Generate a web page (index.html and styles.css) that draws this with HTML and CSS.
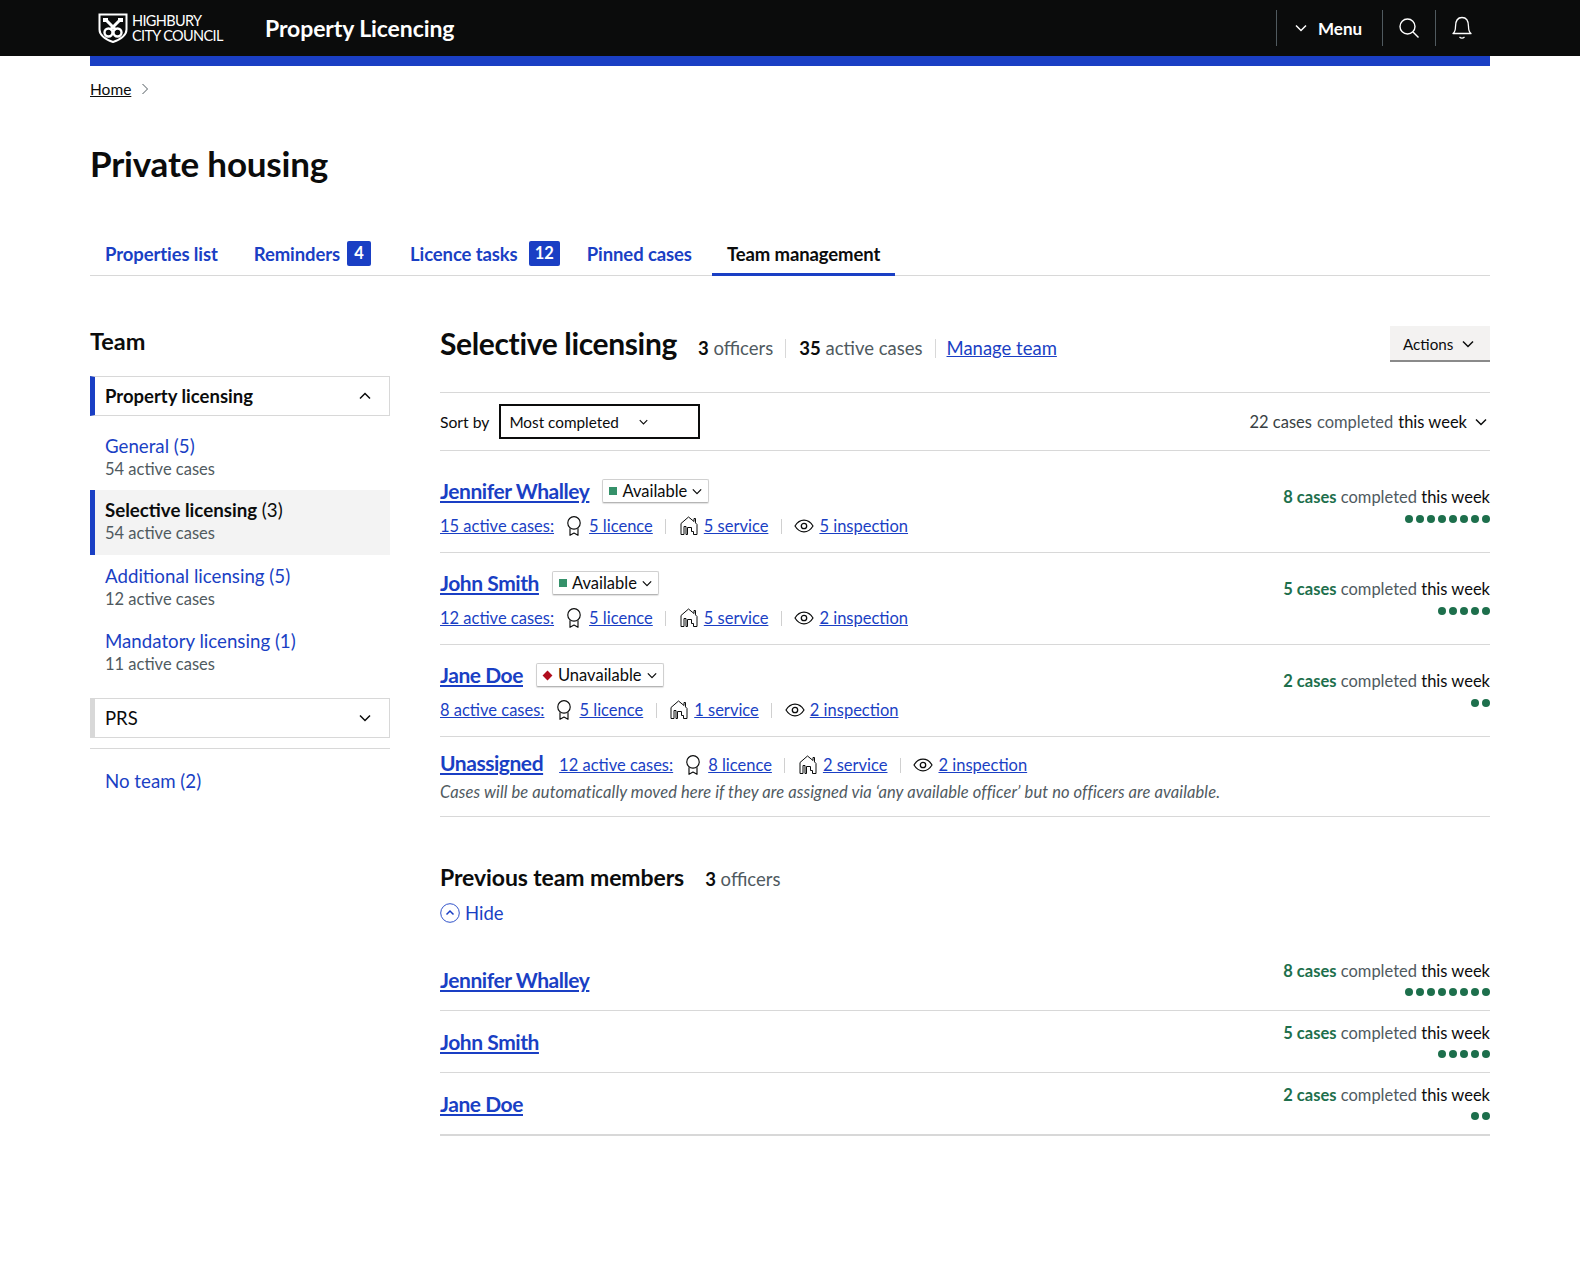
FILE: index.html
```html
<!DOCTYPE html>
<html lang="en">
<head>
<meta charset="utf-8">
<title>Private housing</title>
<link rel="stylesheet" href="styles.css">
</head>
<body>
<svg width="0" height="0" class="defs">
  <defs>
    <symbol id="i-award" viewBox="0 0 18 24"><circle cx="9" cy="8.500" r="7" fill="none" stroke="currentColor" stroke-width="1.300"/><path d="M4.500 14.500v8l4.500-2.500 4.500 2.500v-8" fill="none" stroke="currentColor" stroke-width="1.300" stroke-linejoin="round"/></symbol>
    <symbol id="i-house" viewBox="0 0 18 20"><path d="M1 18.500V7.500L8.500 1 14 5.500V2.500h1.500v4.400L17 8.500v10h-3.500v-3h-2v-4H7.500v7H6v-8H4v8z" fill="none" stroke="currentColor" stroke-width="1" stroke-linejoin="round"/></symbol>
    <symbol id="i-eye" viewBox="0 0 20 14"><path d="M1 7c2.300-3.800 5.300-5.800 9-5.800s6.700 2 9 5.800c-2.300 3.800-5.300 5.800-9 5.800S3.300 10.800 1 7z" fill="none" stroke="currentColor" stroke-width="1.200"/><circle cx="10" cy="7" r="2.700" fill="none" stroke="currentColor" stroke-width="1.300"/></symbol>
    <symbol id="i-chev" viewBox="0 0 12 8"><path d="M1 1.500l5 5 5-5" fill="none" stroke="currentColor" stroke-width="1.500"/></symbol>
  </defs>
</svg>
<header class="topbar">
  <div class="brand">
    <svg class="crest" width="30" height="30" viewBox="0 0 30 30"><path d="M1.500 1.500h27v15c0 6-5 9.500-13.500 12.500C6.500 26 1.500 22.500 1.500 16.500z" fill="#0b0c0c" stroke="#fff" stroke-width="2"/><path d="M7 6l11 11M23 6L12 17" stroke="#fff" stroke-width="3"/><path d="M5 5h5v4H5zM20 5h5v4h-5z" fill="#fff"/><circle cx="10.500" cy="19.500" r="4" fill="none" stroke="#fff" stroke-width="2.400"/><circle cx="19.500" cy="19.500" r="4" fill="none" stroke="#fff" stroke-width="2.400"/></svg>
    <div class="brand-name">HIGHBURY<br>CITY COUNCIL</div>
    <div class="service">Property Licencing</div>
  </div>
  <nav class="top-actions">
    <div class="top-item menu"><svg class="chev-white" width="12" height="8"><use href="#i-chev"/></svg><span>Menu</span></div>
    <div class="top-item icon"><svg width="22" height="22" viewBox="0 0 22 22"><circle cx="9.500" cy="9.500" r="7.500" fill="none" stroke="#fff" stroke-width="1.400"/><path d="M15 15l5.500 5.500" stroke="#fff" stroke-width="1.400"/></svg></div>
    <div class="top-item icon"><svg width="22" height="26" viewBox="0 0 22 26"><path d="M2 18.500c2-1.500 2.500-3 2.500-7C4.500 6 7 2.500 11 2.500s6.500 3.500 6.500 9c0 4 .5 5.500 2.500 7z" fill="none" stroke="#fff" stroke-width="1.300" stroke-linejoin="round"/><path d="M8.500 22c1.500 1.300 3.500 1.300 5 0" fill="none" stroke="#fff" stroke-width="1.300"/></svg></div>
  </nav>
</header>
<div class="wrap">
  <div class="blue-bar"></div>
  <div class="crumbs"><a href="#">Home</a><svg width="8" height="12" viewBox="0 0 8 12"><path d="M1.500 1l5 5-5 5" fill="none" stroke="#505a5f" stroke-width="1"/></svg></div>
  <h1>Private housing</h1>
  <div class="tabs">
    <a class="tab tab-props" href="#">Properties list</a>
    <a class="tab tab-rem" href="#">Reminders<span class="badge">4</span></a>
    <a class="tab tab-lic" href="#">Licence tasks<span class="badge">12</span></a>
    <a class="tab" href="#">Pinned cases</a>
    <a class="tab active" href="#">Team management</a>
  </div>
  <div class="layout">
    <aside class="side">
      <h2>Team</h2>
      <div class="acc open"><span>Property licensing</span><svg class="chev-up" width="12" height="8"><use href="#i-chev"/></svg></div>
      <ul class="team-list">
        <li><a href="#">General (5)</a><small>54 active cases</small></li>
        <li class="current"><b>Selective licensing</b> (3)<small>54 active cases</small></li>
        <li><a href="#">Additional licensing (5)</a><small>12 active cases</small></li>
        <li><a href="#">Mandatory licensing (1)</a><small>11 active cases</small></li>
      </ul>
      <div class="acc closed"><span>PRS</span><svg width="12" height="8"><use href="#i-chev"/></svg></div>
      <div class="side-hr"></div>
      <a class="noteam" href="#">No team (2)</a>
    </aside>
    <main class="main">
      <div class="main-head">
        <div class="title"><h2>Selective licensing</h2>
          <span class="stat"><b>3</b> officers</span><span class="stat"><b>35</b> active cases</span><a class="manage" href="#">Manage team</a></div>
        <button class="actions">Actions<svg width="12" height="8"><use href="#i-chev"/></svg></button>
      </div>
      <div class="sortbar">
        <div class="sort"><span>Sort by</span><div class="select">Most completed<svg width="9" height="6" viewBox="0 0 12 8"><use href="#i-chev"/></svg></div></div>
        <div class="week"><span>22 cases</span> <em>completed</em> <span class="tw">this week</span><svg width="12" height="8"><use href="#i-chev"/></svg></div>
      </div>

      <section class="row">
        <div class="row-l">
          <div class="nameline"><a class="name" href="#">Jennifer Whalley</a><span class="status"><i class="sq"></i>Available<svg width="10" height="7" viewBox="0 0 12 8"><use href="#i-chev"/></svg></span></div>
          <div class="cases"><a href="#">15 active cases:</a><svg class="ic-a"><use href="#i-award"/></svg><a href="#">5 licence</a><i class="sep"></i><svg class="ic-h"><use href="#i-house"/></svg><a href="#">5 service</a><i class="sep"></i><svg class="ic-e"><use href="#i-eye"/></svg><a href="#">5 inspection</a></div>
        </div>
        <div class="done"><p><b>8 cases</b> <em>completed</em> this week</p><div class="dots"><i></i><i></i><i></i><i></i><i></i><i></i><i></i><i></i></div></div>
      </section>
      <section class="row">
        <div class="row-l">
          <div class="nameline"><a class="name" href="#">John Smith</a><span class="status"><i class="sq"></i>Available<svg width="10" height="7" viewBox="0 0 12 8"><use href="#i-chev"/></svg></span></div>
          <div class="cases"><a href="#">12 active cases:</a><svg class="ic-a"><use href="#i-award"/></svg><a href="#">5 licence</a><i class="sep"></i><svg class="ic-h"><use href="#i-house"/></svg><a href="#">5 service</a><i class="sep"></i><svg class="ic-e"><use href="#i-eye"/></svg><a href="#">2 inspection</a></div>
        </div>
        <div class="done"><p><b>5 cases</b> <em>completed</em> this week</p><div class="dots"><i></i><i></i><i></i><i></i><i></i></div></div>
      </section>
      <section class="row">
        <div class="row-l">
          <div class="nameline"><a class="name" href="#">Jane Doe</a><span class="status"><i class="dia"></i>Unavailable<svg width="10" height="7" viewBox="0 0 12 8"><use href="#i-chev"/></svg></span></div>
          <div class="cases"><a href="#">8 active cases:</a><svg class="ic-a"><use href="#i-award"/></svg><a href="#">5 licence</a><i class="sep"></i><svg class="ic-h"><use href="#i-house"/></svg><a href="#">1 service</a><i class="sep"></i><svg class="ic-e"><use href="#i-eye"/></svg><a href="#">2 inspection</a></div>
        </div>
        <div class="done"><p><b>2 cases</b> <em>completed</em> this week</p><div class="dots"><i></i><i></i></div></div>
      </section>
      <section class="row unassigned">
        <div class="cases"><a class="name" href="#">Unassigned</a><a class="first" href="#">12 active cases:</a><svg class="ic-a"><use href="#i-award"/></svg><a href="#">8 licence</a><i class="sep"></i><svg class="ic-h"><use href="#i-house"/></svg><a href="#">2 service</a><i class="sep"></i><svg class="ic-e"><use href="#i-eye"/></svg><a href="#">2 inspection</a></div>
        <p class="note">Cases will be automatically moved here if they are assigned via ‘any available officer’ but no officers are available.</p>
      </section>

      <div class="prev-head"><h3>Previous team members</h3><span class="stat"><b>3</b> officers</span></div>
      <a class="hide" href="#"><svg width="20" height="20" viewBox="0 0 20 20"><circle cx="10" cy="10" r="9.300" fill="none" stroke="#1a3fc4" stroke-width=".9"/><path d="M6.500 11.500L10 8l3.500 3.500" fill="none" stroke="#1a3fc4" stroke-width="1.500"/></svg>Hide</a>
      <div class="prev">
        <section class="row small"><a class="name" href="#">Jennifer Whalley</a><div class="done"><p><b>8 cases</b> <em>completed</em> this week</p><div class="dots"><i></i><i></i><i></i><i></i><i></i><i></i><i></i><i></i></div></div></section>
        <section class="row small"><a class="name" href="#">John Smith</a><div class="done"><p><b>5 cases</b> <em>completed</em> this week</p><div class="dots"><i></i><i></i><i></i><i></i><i></i></div></div></section>
        <section class="row small last"><a class="name" href="#">Jane Doe</a><div class="done"><p><b>2 cases</b> <em>completed</em> this week</p><div class="dots"><i></i><i></i></div></div></section>
      </div>
    </main>
  </div>
</div>
</body>
</html>
```

FILE: styles.css
```css
* { box-sizing: border-box; }
html, body { margin: 0; padding: 0; }
body { font-family: "Lato", "Noto Sans", sans-serif; font-size: 18px; color: #0b0c0c; background: #fff; height: 1285px; overflow: hidden; }
a { color: #1a3fc4; }
h1, h2, h3, p, ul { margin: 0; padding: 0; }
.defs { position: absolute; }
.topbar { height: 56px; background: #0b0c0c; color: #fff; display: flex; justify-content: space-between; padding-left: 98px; padding-right: 92px; }
.brand { display: flex; align-items: center; }
.crest { margin-right: 4px; }
.brand-name { font-size: 14.500px; line-height: 15px; width: 133px; letter-spacing: -.65px; }
.service { font-size: 23px; font-weight: 700; letter-spacing: -.1px; }
.top-actions { display: flex; align-items: center; height: 36px; margin-top: 10px; }
.top-item { height: 36px; display: flex; align-items: center; border-left: 1px solid #505a5f; }
.menu { width: 106px; padding-left: 18px; gap: 11px; font-weight: 700; font-size: 17px; }
.chev-white { color: #fff; }
.icon { width: 53px; justify-content: center; }
.wrap { width: 1400px; margin-left: 90px; }
.blue-bar { height: 10px; background: #1a3fc4; }
.crumbs { display: flex; align-items: center; gap: 10px; height: 44px; padding-top: 1px; font-size: 15.500px; }
.crumbs a { color: #0b0c0c; }
h1 { font-size: 35px; line-height: 44px; margin-top: 31px; font-weight: 700; letter-spacing: -.2px; }
.tabs { display: flex; gap: 5px; height: 46px; margin-top: 45px; border-bottom: 1px solid #d8d8d8; }
.tab { display: flex; padding: 2px 15px 0; height: 46px; align-items: center; font-weight: 700; font-size: 18.500px; letter-spacing: -.1px; text-decoration: none; white-space: nowrap; }
.tab-props { margin-right: 1px; }
.tab-rem .badge { margin-left: 7px; margin-right: 4px; }
.tab-lic .badge { margin-left: 11px; margin-right: -8px; }
.tab.active { color: #0b0c0c; border-bottom: 3px solid #1a3fc4; padding-top: 5px; }
.badge { position: relative; top: -1px; display: block; min-width: 24px; height: 25px; line-height: 25px; background: #1a3fc4; color: #fff; border-radius: 2px; text-align: center; padding: 0 6px; font-size: 16.500px; letter-spacing: 0; }
.layout { display: flex; gap: 50px; margin-top: 48px; }
.side { width: 300px; flex: none; }
.side h2 { font-size: 23.500px; line-height: 34px; margin-bottom: 18px; font-weight: 700; }
.acc { height: 40px; border: 1px solid #d8d8d8; border-left: 5px solid #1a3fc4; display: flex; align-items: center; justify-content: space-between; padding: 0 18px 0 10px; font-size: 18.500px; }
.acc.open { font-weight: 700; }
.acc.closed { border-left-color: #d8d8d8; font-weight: 400; }
.chev-up { transform: rotate(180deg); }
.team-list { list-style: none; margin: 9px 0 13px; }
.team-list li { padding: 8px 15px 7px; height: 65px; font-size: 18.700px; line-height: 26px; color: #0b0c0c; }
.team-list a { text-decoration: none; }
.team-list small { display: block; font-size: 16.500px; line-height: 21px; color: #505a5f; }
.team-list li.current { background: #f3f3f3; border-left: 5px solid #1a3fc4; padding-left: 10px; padding-top: 7px; }
.side-hr { height: 1px; background: #d8d8d8; margin: 10px 0 19px; }
.noteam { text-decoration: none; font-size: 18.700px; padding-left: 15px; line-height: 26px; display: block; }
.main { flex: 1; min-width: 0; }
.main-head { height: 69px; border-bottom: 1px solid #d8d8d8; display: flex; justify-content: space-between; align-items: flex-start; }
.title { display: flex; align-items: baseline; padding-top: 1px; }
.title h2 { font-size: 30px; line-height: 36px; font-weight: 700; margin-right: 21px; letter-spacing: -.35px; }
.stat { font-size: 18.500px; color: #505a5f; }
.stat b { color: #0b0c0c; }
.title .stat { padding-right: 12px; margin-right: 13px; border-right: 1px solid #d8d8d8; line-height: 19px; }
.manage { font-size: 18.500px; margin-left: -2px; }
.actions { font: inherit; font-size: 15.200px; color: #0b0c0c; border: 0; border-bottom: 2px solid #8a8a8a; background: #f3f2f1; height: 36px; width: 100px; margin-top: 2px; display: flex; align-items: center; gap: 9px; padding: 2px 0 0 13px; border-radius: 0; }
.sortbar { height: 58px; border-bottom: 1px solid #d8d8d8; display: flex; justify-content: space-between; align-items: center; font-size: 16.500px; }
.sort { display: flex; align-items: center; gap: 10px; font-size: 15.700px; }
.select { width: 201px; height: 35px; border: 2px solid #0b0c0c; display: flex; align-items: center; gap: 20px; padding: 1px 0 0 8px; font-size: 15.300px; }
.week { color: #0b0c0c; display: flex; gap: 5px; align-items: center; padding-right: 3px; }
.week span:first-child { color: #383f43; }
.week em, .done em { font-style: normal; color: #505a5f; }
.week svg { margin-left: 3px; }
.row { border-bottom: 1px solid #d8d8d8; display: flex; justify-content: space-between; align-items: flex-start; height: 92px; }
.sortbar + .row { height: 102px; }
.sortbar + .row .row-l { padding-top: 25px; }
.sortbar + .row .done { padding-top: 36px; }
.row .row-l { padding-top: 15px; }
.nameline { display: flex; align-items: center; gap: 13px; height: 30px; }
.name { font-size: 21px; font-weight: 700; line-height: 30px; letter-spacing: -.45px; }
.status { display: flex; align-items: center; font-size: 16.500px; height: 24px; border: 1px solid #d0d0d0; border-bottom-color: #b5b5b5; border-radius: 2px; box-shadow: 0 1px 1px rgba(0,0,0,.12); padding: 0 6px; color: #0b0c0c; }
.status svg { margin-left: 5px; }
.sq { width: 8px; height: 8px; background: #35916a; margin-right: 5px; }
.dia { width: 7px; height: 7px; background: #b10e1e; transform: rotate(45deg); margin-right: 7px; margin-left: 1px; }
.cases { display: flex; align-items: center; height: 24px; margin-top: 8px; font-size: 16.500px; }
.cases svg { color: #0b0c0c; flex: none; }
.ic-a { width: 16px; height: 22px; margin-left: 12px; margin-right: 7px; }
.ic-h { width: 18px; height: 20px; margin-right: 6px; }
.ic-e { width: 20px; height: 14px; margin-left: -1px; margin-right: 5px; }
.sep { width: 1px; height: 15px; background: #d0d0d0; margin: 0 13.500px 0 12.500px; }
.done { padding-top: 26px; text-align: right; font-size: 16.500px; }
.done b { color: #1d6f4c; }
.dots { display: flex; justify-content: flex-end; gap: 3px; margin-top: 8px; }
.dots i { width: 8px; height: 8px; border-radius: 50%; background: #1d6f4c; }
.unassigned { display: block; height: 80px; padding-top: 11px; }
.unassigned .cases { margin-top: 0; height: 30px; padding-top: 4px; }
.unassigned .name { margin-right: 16px; margin-top: -4px; }
.note { font-style: italic; font-size: 16.500px; letter-spacing: .1px; color: #505a5f; line-height: 24px; margin-top: 2px; }
.prev-head { display: flex; align-items: baseline; margin-top: 45px; }
.prev-head h3 { font-size: 23px; line-height: 30px; font-weight: 700; margin-right: 21px; letter-spacing: -.1px; }
.hide { display: flex; align-items: center; gap: 5px; text-decoration: none; font-size: 18.500px; height: 30px; margin-top: 6px; }
.prev { margin-top: 21px; }
.row.small { height: 62px; }
.row.small .name { margin-top: 16px; }
.row.small .done { padding-top: 12px; }
.row.small .dots { margin-top: 7px; }
.row.last { border-bottom-width: 2px; height: 63px; }
```
